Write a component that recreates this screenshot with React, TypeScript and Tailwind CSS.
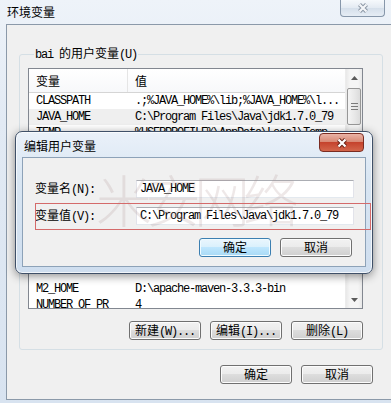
import React from "react";

const cjk = "font-['Noto_Sans_CJK_SC',sans-serif]";
const mono = "font-['Liberation_Mono','Noto_Sans_CJK_SC',monospace] tracking-[-1.2px]";

const Mixed = ({ zh, en }: { zh: string; en?: string }) => (
  <span className="whitespace-nowrap leading-[16px]">
    <span className={cjk}>{zh}</span>
    {en && <span className={mono}>{en}</span>}
  </span>
);

const CloseX = ({ fg, edge }: { fg: string; edge: string }) => (
  <svg width="12" height="10" viewBox="0 0 12 10">
    <path d="M2.5 1.5 L9.5 8.5 M9.5 1.5 L2.5 8.5" stroke={edge} strokeWidth="4.2" />
    <path d="M2.5 1.5 L9.5 8.5 M9.5 1.5 L2.5 8.5" stroke={fg} strokeWidth="2.2" />
  </svg>
);

interface BtnProps {
  zh: string;
  en?: string;
  primary?: boolean;
}

const Btn = ({ zh, en, primary }: BtnProps) => (
  <div
    className={
      "flex h-[19px] w-[72px] items-center justify-center rounded-[3px] border text-[12px] text-black " +
      (primary
        ? "border-[#3c7fb1] bg-[linear-gradient(to_bottom,#eaf6fd_0%,#d9f0fc_49%,#bee6fd_50%,#a7d9f5_100%)] shadow-[inset_0_0_0_1px_#f0fbff]"
        : "border-[#707070] bg-[linear-gradient(to_bottom,#f2f2f2_0%,#ebebeb_49%,#dddddd_50%,#cfcfcf_100%)] shadow-[inset_0_0_0_1px_#fcfcfc]")
    }
  >
    <Mixed zh={zh} en={en} />
  </div>
);

const Row = ({ name, value, shade }: { name: string; value: string; shade?: boolean }) => (
  <div className={"flex h-[16px] shrink-0 items-center text-[12px] " + (shade ? "bg-[#efefef]" : "")}>
    <span className={`${mono} w-[99px] pl-[7px] whitespace-nowrap`}>{name}</span>
    <span className={`${mono} pl-[7px] whitespace-nowrap`}>{value}</span>
  </div>
);

const Field = ({ value }: { value: string }) => (
  <div className="flex h-[18px] w-[218px] items-center border border-[#abadb3] border-x-[#e2e3ea] border-b-[#e3e9ef] bg-white pl-[3px] text-[12px]">
    <span className={mono}>{value}</span>
  </div>
);

export default function App() {
  return (
    <div className="relative h-[403px] w-[391px] overflow-hidden bg-[linear-gradient(to_bottom,#eef3f9_0%,#e2eaf4_30%,#d8e3f0_100%)] text-[12px] text-black">
      {/* outer window title */}
      <div className="flex h-[24px] items-start justify-between">
        <span className={`${cjk} pl-[7px] pt-[4px] leading-[16px]`}>环境变量</span>
        <div className="mr-[6px] flex h-[17px] w-[45px] items-center justify-center rounded-b-[4px] border border-t-0 border-[#8797aa] bg-[linear-gradient(to_bottom,#f6f9fc,#e3eaf2_50%,#d5dfea_51%,#e6edf5)]">
          <CloseX fg="#f4f6f9" edge="#8c98a6" />
        </div>
      </div>

      {/* outer client */}
      <div className="ml-[6px] flex h-[376px] w-[390px] flex-col border border-[#8b99a9] bg-[#f0f0f0]">
        <fieldset className="mx-[12px] mt-[20px] w-[364px] rounded-[3px] border border-[#d5dfe5] pb-[9px] pl-[8px] pr-[19px] pt-[5px]">
          <legend className="ml-[6px] px-[1px] leading-[16px]">
            <span className={mono}>bai </span>
            <span className={cjk}>的用户变量</span>
            <span className={mono}>(U)</span>
          </legend>

          <div className="flex h-[241px] w-[335px] border border-[#828790] bg-white">
            <div className="flex flex-1 flex-col overflow-hidden">
              <div className="flex h-[24px] shrink-0 items-center border-b border-[#d5d5d5] bg-[linear-gradient(to_bottom,#ffffff,#f7f8fa)]">
                <span className={`${cjk} flex h-full w-[99px] items-center border-r border-[#e5e5e5] pl-[7px]`}>变量</span>
                <span className={`${cjk} pl-[7px]`}>值</span>
              </div>
              <div className="flex flex-1 flex-col overflow-hidden">
                <Row name="CLASSPATH" value=".;%JAVA_HOME%\lib;%JAVA_HOME%\l..." />
                <Row name="JAVA_HOME" value="C:\Program Files\Java\jdk1.7.0_79" shade />
                <Row name="TEMP" value="%USERPROFILE%\AppData\Local\Temp" />
                <Row name="TMP" value="%USERPROFILE%\AppData\Local\Temp" />
                <div className="flex-1" />
                <div className="mb-[-5px] flex flex-col">
                  <Row name="M2_HOME" value="D:\apache-maven-3.3.3-bin" />
                  <Row name="NUMBER_OF_PR" value="4" />
                </div>
              </div>
            </div>
            {/* scrollbar */}
            <div className="flex w-[17px] flex-col border-l border-[#ececec] bg-[linear-gradient(to_right,#e8e8e8,#f5f5f5_25%,#f5f5f5_75%,#e8e8e8)]">
              <div className="flex h-[17px] items-center justify-center">
                <svg width="7" height="4" viewBox="0 0 7 4">
                  <path d="M0 4 L3.5 0 L7 4Z" fill="#5a5a5a" />
                </svg>
              </div>
              <div className="mx-[1px] mt-[2px] flex h-[37px] flex-col items-center justify-center gap-[2px] rounded-[2px] border border-[#979797] bg-[linear-gradient(to_right,#f4f4f4,#e9e9e9_50%,#dcdcdc)]">
                <div className="h-[1px] w-[7px] bg-[#7a7a7a]" />
                <div className="h-[1px] w-[7px] bg-[#7a7a7a]" />
                <div className="h-[1px] w-[7px] bg-[#7a7a7a]" />
              </div>
              <div className="flex-1" />
              <div className="flex h-[17px] items-center justify-center">
                <svg width="7" height="4" viewBox="0 0 7 4">
                  <path d="M0 0 L3.5 4 L7 0Z" fill="#5a5a5a" />
                </svg>
              </div>
            </div>
          </div>

          <div className="mt-[12px] flex justify-end gap-[9px]">
            <Btn zh="新建" en="(W)..." />
            <Btn zh="编辑" en="(I)..." />
            <Btn zh="删除" en="(L)" />
          </div>
        </fieldset>

        <div className="mt-[15px] flex justify-end gap-[9px] pr-[22px]">
          <Btn zh="确定" />
          <Btn zh="取消" />
        </div>
      </div>

      {/* edit dialog */}
      <div className="absolute left-[15px] top-[131px] flex h-[143px] w-[358px] flex-col rounded-[7px] border border-[#3f5068] bg-[linear-gradient(to_bottom,#eaf1f9,#d8e5f2_35%,#cfdeef)] px-[6px] pb-[6px] shadow-[0_2px_10px_rgba(0,0,0,0.45),inset_0_0_0_1px_rgba(255,255,255,0.7)]">
        <div className="flex h-[25px] items-start justify-between">
          <span className={`${cjk} pl-[2px] pt-[6px] leading-[16px]`}>编辑用户变量</span>
          <div className="mr-[2px] mt-[1px] flex h-[19px] w-[45px] items-center justify-center rounded-[4px] border border-[#7a2c22] bg-[linear-gradient(to_bottom,#eab3a6,#d98a76_45%,#c5432d_50%,#d3664b)]">
            <CloseX fg="#ffffff" edge="#6b2418" />
          </div>
        </div>
        <div className="flex flex-1 flex-col border border-[#8da2b8] bg-[#f0f0f0]">
          <div className="mt-[22px] flex h-[18px] items-center pl-[12px]">
            <span className="w-[101px]">
              <Mixed zh="变量名" en="(N):" />
            </span>
            <Field value="JAVA_HOME" />
          </div>
          <div className="mt-[9px] flex h-[18px] items-center pl-[12px]">
            <span className="w-[101px]">
              <Mixed zh="变量值" en="(V):" />
            </span>
            <Field value="C:\Program Files\Java\jdk1.7.0_79" />
          </div>
          <div className="mt-[13px] flex justify-end gap-[9px] pr-[13px]">
            <Btn zh="确定" primary />
            <Btn zh="取消" />
          </div>
        </div>

        {/* watermark */}
        <div className={`${cjk} pointer-events-none absolute left-[80px] top-[38px] whitespace-nowrap text-[56px] font-light leading-none tracking-[-7px] text-[rgba(170,140,140,0.2)]`}>
          米安网络
        </div>
        {/* red highlight */}
        <div className="pointer-events-none absolute left-[19px] top-[71px] h-[27px] w-[336px] border border-[#d46a6a]" />
      </div>
    </div>
  );
}
